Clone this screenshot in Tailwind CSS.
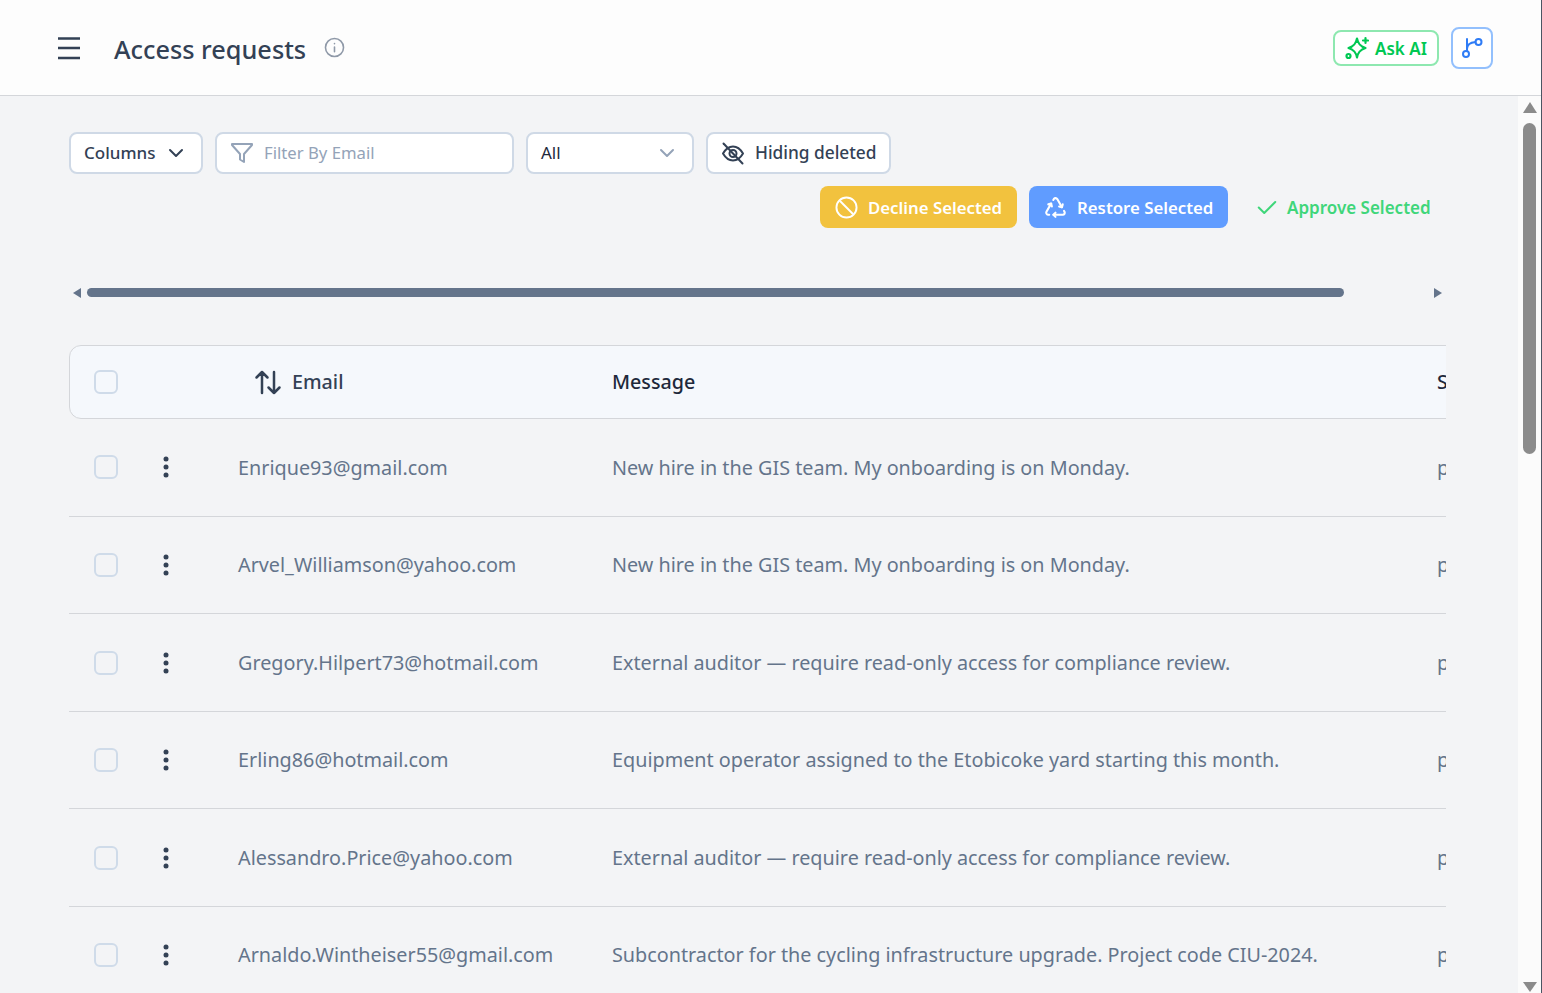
<!DOCTYPE html>
<html>
  <head>
    <meta charset="UTF-8" />
    <title>Access requests</title>
    <script src="https://cdn.jsdelivr.net/npm/@tailwindcss/browser@4"></script>
  </head>
  <body class="h-screen overflow-hidden flex flex-col bg-[#f3f4f6] border-r border-[#4b5563] font-['Noto_Sans',sans-serif]">
    <header class="h-[96px] shrink-0 bg-[#fdfdfd] border-b border-[#d4d6da] flex items-center pl-[56px] pr-[48px]">
      <svg class="w-[26px] h-[26px] text-[#334155]" viewBox="0 0 26 26" fill="none" stroke="currentColor" stroke-width="2.6">
        <path d="M2 3.500h22M2 13h22M2 23h22" />
      </svg>
      <h1 class="ml-[32px] pt-[5px] text-[25.300px] font-medium text-[#334155]">Access requests</h1>
      <svg class="ml-[18px] w-[21px] h-[21px] text-[#8f99a8]" viewBox="0 0 20 20" fill="none" stroke="currentColor" stroke-width="1.5" stroke-linecap="round">
        <circle cx="10" cy="10" r="8.6" />
        <path d="M10 9.500v4.500M10 6.300v.1" />
      </svg>
      <div class="ml-auto flex items-center gap-[12px]">
        <button class="h-[36px] w-[106px] rounded-[8px] border-2 border-[#8ee8b0] bg-white flex items-center justify-center gap-[6px] text-[#00c853] font-semibold text-[17px]">
          <svg class="w-[24px] h-[24px]" viewBox="0 0 24 24" fill="none" stroke="currentColor" stroke-width="2.200" stroke-linecap="round" stroke-linejoin="round">
            <path d="M12 2.500c1 5 2.800 7.700 8.500 9.500-5.700 1.800-7.500 4.500-8.500 9.500-1-5-2.800-7.700-8.500-9.500 5.700-1.800 7.500-4.500 8.500-9.500Z" />
            <path d="M20.500 2v5M18 4.500h5" />
            <circle cx="3.500" cy="20" r="2" />
          </svg>
          <span class="pt-[2px]">Ask AI</span>
        </button>
        <button class="h-[42px] w-[42px] rounded-[8px] border-2 border-[#93c0fd] bg-white flex items-center justify-center text-[#2f7cf6]">
          <svg class="w-[24px] h-[24px]" viewBox="0 0 24 24" fill="none" stroke="currentColor" stroke-width="2" stroke-linecap="round">
            <circle cx="6" cy="18" r="3" />
            <circle cx="18.500" cy="6" r="3" />
            <path d="M7 15V3M7 13c0-4 3-6.500 8.500-7" />
          </svg>
        </button>
      </div>
    </header>

    <div class="flex-1 min-h-0 flex">
      <main class="flex-1 min-w-0 overflow-hidden pl-[69px] pr-[72px] pt-[36px]">
        <div class="flex gap-[12px] text-[17px]">
          <button class="h-[42px] w-[134px] rounded-[8px] border-2 border-[#cfd9e6] bg-white flex items-center justify-between pl-[13px] pr-[17px] text-[#334155] font-medium">
            Columns
            <svg class="w-[16px] h-[16px]" viewBox="0 0 16 16" fill="none" stroke="currentColor" stroke-width="2" stroke-linecap="round" stroke-linejoin="round"><path d="M2 5l6 6 6-6" /></svg>
          </button>
          <div class="h-[42px] w-[299px] rounded-[8px] border-2 border-[#cfd9e6] bg-white flex items-center pl-[13px] gap-[10px] text-[16.700px] text-[#94a3b8]">
            <svg class="w-[24px] h-[24px]" viewBox="0 0 24 24" fill="none" stroke="currentColor" stroke-width="2" stroke-linejoin="round"><path d="M2 3h20v1l-8 9v8l-4-2.500V13L2 4Z" /></svg>
            Filter By Email
          </div>
          <div class="h-[42px] w-[168px] rounded-[8px] border-2 border-[#cfd9e6] bg-white flex items-center justify-between pl-[13px] pr-[17px] text-[#1e293b]">
            All
            <svg class="w-[16px] h-[16px] text-[#94a3b8]" viewBox="0 0 16 16" fill="none" stroke="currentColor" stroke-width="2" stroke-linecap="round" stroke-linejoin="round"><path d="M2 5l6 6 6-6" /></svg>
          </div>
          <button class="h-[42px] w-[185px] rounded-[8px] border-2 border-[#cfd9e6] bg-white flex items-center pl-[13px] gap-[10px] text-[17.300px] text-[#334155] font-medium">
            <svg class="w-[24px] h-[24px]" viewBox="0 0 24 24" fill="none" stroke="currentColor" stroke-width="2" stroke-linecap="round" stroke-linejoin="round">
              <path d="M2 12.500c2.500-4.300 6-7 10-7s7.500 2.700 10 7c-2.500 4.300-6 7-10 7s-7.500-2.700-10-7Z" />
              <circle cx="12" cy="12.500" r="3.500" />
              <path d="M2.500 2.500l19 20" />
            </svg>
            Hiding deleted
          </button>
        </div>

        <div class="mt-[12px] flex justify-end gap-[12px] text-[16.800px] font-semibold">
          <button class="h-[42px] w-[197px] rounded-[8px] bg-[#f2c23e] text-white flex items-center pl-[15px] gap-[10px]">
            <svg class="w-[23px] h-[23px]" viewBox="0 0 24 24" fill="none" stroke="currentColor" stroke-width="2"><circle cx="12" cy="12" r="10.500" /><path d="M5 5l14 14" /></svg>
            <span class="pt-[1px]">Decline Selected</span>
          </button>
          <button class="h-[42px] w-[199px] rounded-[8px] bg-[#609cff] text-white flex items-center pl-[14px] gap-[9px]">
            <svg class="w-[25px] h-[25px]" viewBox="0 0 24 24" fill="none" stroke="currentColor" stroke-width="2" stroke-linecap="round" stroke-linejoin="round">
              <path d="M12 17l-2 2l2 2" /><path d="M10 19h9a2 2 0 0 0 1.750 -2.750l-.550 -1" />
              <path d="M8.536 11l-.732 -2.732l-2.732 .732" /><path d="M7.804 8.268l-4.500 7.794a2 2 0 0 0 1.506 2.890l1.141 .024" />
              <path d="M15.464 11l2.732 .732l.732 -2.732" /><path d="M18.196 11.732l-4.500 -7.794a2 2 0 0 0 -3.256 -.140l-.591 .976" />
            </svg>
            <span class="pt-[1px]">Restore Selected</span>
          </button>
          <button class="h-[42px] w-[206px] rounded-[8px] text-[17px] text-[#3fd67a] flex items-center pl-[16px] gap-[9px]">
            <svg class="w-[22px] h-[22px]" viewBox="0 0 24 24" fill="none" stroke="currentColor" stroke-width="2.200" stroke-linecap="round" stroke-linejoin="round"><path d="M3 12.500l6 6 12-12" /></svg>
            <span class="pt-[1px]">Approve Selected</span>
          </button>
        </div>

        <!-- horizontal scrollbar of the table -->
        <div class="mt-[60px] h-[9px] flex items-center">
          <div class="ml-[4px] w-0 h-0 border-y-[5px] border-y-transparent border-r-[8px] border-r-[#64748b]"></div>
          <div class="ml-[6px] w-[1257px] h-[9px] rounded-full bg-[#64748b]"></div>
          <div class="ml-[90px] w-0 h-0 border-y-[5px] border-y-transparent border-l-[8px] border-l-[#64748b]"></div>
        </div>

        <div class="mt-[48px] overflow-hidden">
          <div class="grid grid-cols-[168px_374px_825px_100px] items-center h-[74px] w-[1468px] rounded-l-[12px] border border-[#d4d6da] bg-[#f5f8fc] text-[19.700px] font-medium text-[#1e293b]">
            <div class="pl-[24px]"><div class="w-[24px] h-[24px] rounded-[6px] border-2 border-[#cfdbe9]"></div></div>
            <div class="pl-[16px] flex items-center gap-[10px] text-[#334155]">
              <svg class="w-[28px] h-[28px]" viewBox="0 0 28 28" fill="none" stroke="currentColor" stroke-width="2.500" stroke-linecap="round" stroke-linejoin="round"><path d="M8 25V4M2.500 9.500 8 4l5.500 5.500M20 4v21M14.500 19.500 20 25l5.500-5.500" /></svg>
              Email
            </div>
            <div>Message</div>
            <div>Status</div>
          </div>

          <div class="grid grid-cols-[169px_374px_825px_100px] items-center h-[97.750px] w-[1468px] border-b border-[#d4d6da] text-[19.800px] text-[#64748b]">
            <div class="pl-[25px] flex items-center"><div class="w-[24px] h-[24px] rounded-[6px] border-2 border-[#cfdbe9]"></div><svg class="ml-[36px] w-[24px] h-[24px] text-[#334155]" viewBox="0 0 24 24" fill="currentColor"><circle cx="12" cy="4" r="2.500" /><circle cx="12" cy="12" r="2.500" /><circle cx="12" cy="20" r="2.500" /></svg></div>
            <div>Enrique93@gmail.com</div>
            <div>New hire in the GIS team. My onboarding is on Monday.</div>
            <div>pending</div>
          </div>
          <div class="grid grid-cols-[169px_374px_825px_100px] items-center h-[97.500px] w-[1468px] border-b border-[#d4d6da] text-[19.800px] text-[#64748b]">
            <div class="pl-[25px] flex items-center"><div class="w-[24px] h-[24px] rounded-[6px] border-2 border-[#cfdbe9]"></div><svg class="ml-[36px] w-[24px] h-[24px] text-[#334155]" viewBox="0 0 24 24" fill="currentColor"><circle cx="12" cy="4" r="2.500" /><circle cx="12" cy="12" r="2.500" /><circle cx="12" cy="20" r="2.500" /></svg></div>
            <div>Arvel_Williamson@yahoo.com</div>
            <div>New hire in the GIS team. My onboarding is on Monday.</div>
            <div>pending</div>
          </div>
          <div class="grid grid-cols-[169px_374px_825px_100px] items-center h-[97.500px] w-[1468px] border-b border-[#d4d6da] text-[19.800px] text-[#64748b]">
            <div class="pl-[25px] flex items-center"><div class="w-[24px] h-[24px] rounded-[6px] border-2 border-[#cfdbe9]"></div><svg class="ml-[36px] w-[24px] h-[24px] text-[#334155]" viewBox="0 0 24 24" fill="currentColor"><circle cx="12" cy="4" r="2.500" /><circle cx="12" cy="12" r="2.500" /><circle cx="12" cy="20" r="2.500" /></svg></div>
            <div>Gregory.Hilpert73@hotmail.com</div>
            <div>External auditor — require read-only access for compliance review.</div>
            <div>pending</div>
          </div>
          <div class="grid grid-cols-[169px_374px_825px_100px] items-center h-[97.500px] w-[1468px] border-b border-[#d4d6da] text-[19.800px] text-[#64748b]">
            <div class="pl-[25px] flex items-center"><div class="w-[24px] h-[24px] rounded-[6px] border-2 border-[#cfdbe9]"></div><svg class="ml-[36px] w-[24px] h-[24px] text-[#334155]" viewBox="0 0 24 24" fill="currentColor"><circle cx="12" cy="4" r="2.500" /><circle cx="12" cy="12" r="2.500" /><circle cx="12" cy="20" r="2.500" /></svg></div>
            <div>Erling86@hotmail.com</div>
            <div>Equipment operator assigned to the Etobicoke yard starting this month.</div>
            <div>pending</div>
          </div>
          <div class="grid grid-cols-[169px_374px_825px_100px] items-center h-[97.500px] w-[1468px] border-b border-[#d4d6da] text-[19.800px] text-[#64748b]">
            <div class="pl-[25px] flex items-center"><div class="w-[24px] h-[24px] rounded-[6px] border-2 border-[#cfdbe9]"></div><svg class="ml-[36px] w-[24px] h-[24px] text-[#334155]" viewBox="0 0 24 24" fill="currentColor"><circle cx="12" cy="4" r="2.500" /><circle cx="12" cy="12" r="2.500" /><circle cx="12" cy="20" r="2.500" /></svg></div>
            <div>Alessandro.Price@yahoo.com</div>
            <div>External auditor — require read-only access for compliance review.</div>
            <div>pending</div>
          </div>
          <div class="grid grid-cols-[169px_374px_825px_100px] items-center h-[97.500px] w-[1468px] border-b border-[#d4d6da] text-[19.800px] text-[#64748b]">
            <div class="pl-[25px] flex items-center"><div class="w-[24px] h-[24px] rounded-[6px] border-2 border-[#cfdbe9]"></div><svg class="ml-[36px] w-[24px] h-[24px] text-[#334155]" viewBox="0 0 24 24" fill="currentColor"><circle cx="12" cy="4" r="2.500" /><circle cx="12" cy="12" r="2.500" /><circle cx="12" cy="20" r="2.500" /></svg></div>
            <div>Arnaldo.Wintheiser55@gmail.com</div>
            <div>Subcontractor for the cycling infrastructure upgrade. Project code CIU-2024.</div>
            <div>pending</div>
          </div>
        </div>
      </main>

      <!-- page scrollbar -->
      <div class="w-[23px] shrink-0 bg-[#fbfbfb] flex flex-col items-center relative">
        <div class="mt-[6px] w-0 h-0 border-x-[7.500px] border-x-transparent border-b-[11px] border-b-[#8b8b8b]"></div>
        <div class="mt-[10px] w-[13px] h-[331px] rounded-full bg-[#8b8b8b]"></div>
        <div class="absolute bottom-[1px] w-0 h-0 border-x-[7.500px] border-x-transparent border-t-[10px] border-t-[#8b8b8b]"></div>
      </div>
    </div>
  </body>
</html>
